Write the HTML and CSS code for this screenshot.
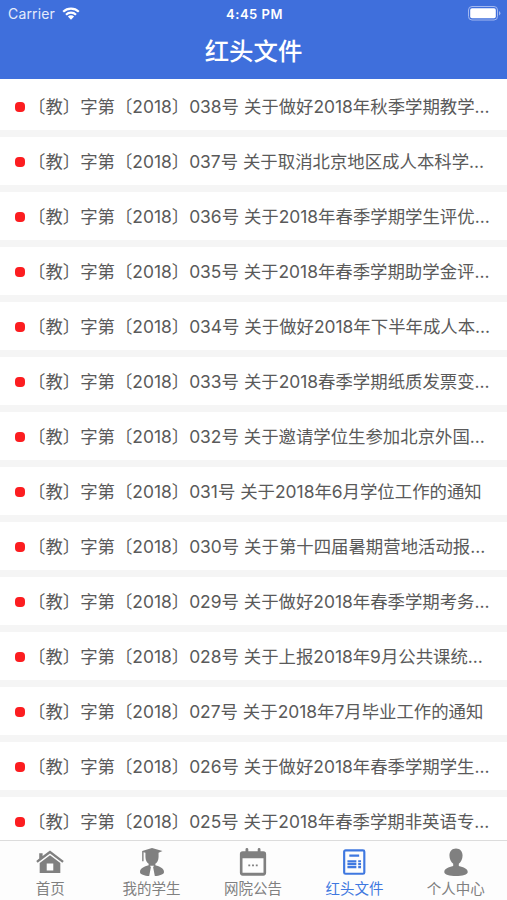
FILE: index.html
```
<!DOCTYPE html>
<html lang="zh-CN">

<head>
  <meta charset="utf-8" />
  <title>红头文件</title>
  <link rel="stylesheet" href="styles.css">
</head>

<body>
  <header class="header">
    <div class="status">
      <div class="carrier">
        <span>Carrier</span>
        <svg class="wifi" viewBox="0 0 18 13">
          <path d="M1.2 4.8a11.2 11.2 0 0 1 15.6 0M4 7.7a7.2 7.2 0 0 1 10 0" fill="none" stroke="#fff" stroke-width="2.2" />
          <path d="M5.9 9.6a4.4 4.4 0 0 1 6.2 0L9 12.8z" fill="#fff" />
        </svg>
      </div>
      <div class="time">4:45 PM</div>
      <svg class="battery" viewBox="0 0 33 15">
        <rect x=".5" y=".5" width="29" height="13.5" rx="3.5" fill="none" stroke="#a3b8ef" />
        <rect x="2.2" y="2.2" width="25.6" height="10" rx="1.8" fill="#fff" />
        <path d="M31 5v4.5q1.4-.7 1.4-2.2T31 5z" fill="#a3b8ef" />
      </svg>
    </div>
    <h1>红头文件</h1>
  </header>

  <ul class="list">
    <li>〔教〕字第〔2018〕038号 关于做好2018年秋季学期教学…</li>
    <li>〔教〕字第〔2018〕037号 关于取消北京地区成人本科学…</li>
    <li>〔教〕字第〔2018〕036号 关于2018年春季学期学生评优…</li>
    <li>〔教〕字第〔2018〕035号 关于2018年春季学期助学金评…</li>
    <li>〔教〕字第〔2018〕034号 关于做好2018年下半年成人本…</li>
    <li>〔教〕字第〔2018〕033号 关于2018春季学期纸质发票变…</li>
    <li>〔教〕字第〔2018〕032号 关于邀请学位生参加北京外国…</li>
    <li>〔教〕字第〔2018〕031号 关于2018年6月学位工作的通知</li>
    <li>〔教〕字第〔2018〕030号 关于第十四届暑期营地活动报…</li>
    <li>〔教〕字第〔2018〕029号 关于做好2018年春季学期考务…</li>
    <li>〔教〕字第〔2018〕028号 关于上报2018年9月公共课统…</li>
    <li>〔教〕字第〔2018〕027号 关于2018年7月毕业工作的通知</li>
    <li>〔教〕字第〔2018〕026号 关于做好2018年春季学期学生…</li>
    <li>〔教〕字第〔2018〕025号 关于2018年春季学期非英语专…</li>
  </ul>

  <nav class="tabs">
    <a class="tab">
      <svg viewBox="0 0 32 32">
        <path d="M4.5 5.500h3.600v3L16 2.600l14.700 11.200-1.500 2L16 5.900 2.800 15.800l-1.500-2 3.200-2.600z" />
        <path d="M16 7.600l11 8.300v10.800H5V15.900zM12.500 16.500v7.500h7v-7.500z" fill-rule="evenodd" />
      </svg>
      <span>首页</span>
    </a>
    <a class="tab">
      <svg viewBox="0 0 32 32">
        <path d="M16 0l11.200 3.300L23 5v4.500c0 3.500-1.600 6-3.400 7.400v1.500c4.700 1.200 9.200 3.200 9.200 7.100 0 2.700-4.800 4-9.800 4.400L17.200 20.500l.9-1.700h-4.200l.9 1.700L13 29.900C8 29.500 3.200 28.200 3.200 25.500c0-3.900 4.500-5.900 9.200-7.100v-1.500C10.600 15.500 9 13 9 9.500V5l-2-.6V14H5.500V3.300z" />
      </svg>
      <span>我的学生</span>
    </a>
    <a class="tab">
      <svg viewBox="0 0 32 32">
        <path d="M5 3.500h3V1.500a1.500 1.500 0 0 1 3 0v2h10V1.500a1.500 1.500 0 0 1 3 0v2H27A3 3 0 0 1 30 6.500v20a3 3 0 0 1-3 3H5a3 3 0 0 1-3-3v-20a3 3 0 0 1 3-3zM4.800 11v15.500h22.400V11z" fill-rule="evenodd" />
        <path d="M11 17.500h2v2h-2zM15 17.500h2v2h-2zM19 17.500h2v2h-2z" />
      </svg>
      <span>网院公告</span>
    </a>
    <a class="tab active">
      <svg viewBox="0 0 32 32">
        <rect x="5.500" y="2.500" width="21.500" height="25" rx="1.500" fill="none" stroke="currentColor" stroke-width="2.300" />
        <path d="M11 7h10.500v2.200H11zM9 13h9.500v2.500H9zM9 16h9.500v2.200H9zM9 18.800h9.500V21.500H9zM20.500 13H23.500v2.200h-3zM20.500 16h3v2.200h-3zM20.500 19h3v2.500h-3z" />
      </svg>
      <span>红头文件</span>
    </a>
    <a class="tab">
      <svg viewBox="0 0 32 32">
        <path d="M16 .5c4.300 0 7 3 7 7.500 0 3.700-1.600 7-4 8.700v2.500c5 1 9.500 3.100 9.500 6.300 0 3-5.700 4.300-12.500 4.300S3.500 28.500 3.500 25.500c0-3.200 4.500-5.300 9.500-6.300v-2.500C10.600 15 9 11.700 9 8 9 3.500 11.700.5 16 .5z" />
      </svg>
      <span>个人中心</span>
    </a>
  </nav>
</body>

</html>
```
FILE: styles.css
```
* {
  box-sizing: border-box;
}

body {
  display: flex;
  flex-direction: column;
  height: 100vh;
  margin: 0;
  overflow: hidden;
  background-color: #f5f5f5;
  color: #5a5a5a;
  font-family: Inter, "Noto Sans CJK SC", sans-serif;
}

.header {
  flex: none;
  height: 79px;
  background-color: #3f6fdc;
  color: #fff;
}

.status {
  display: grid;
  grid-template-columns: 1fr auto 1fr;
  align-items: center;
  height: 27px;
  padding: 0 6px 0 8px;
  font-size: 14px;
}

.carrier {
  display: flex;
  align-items: center;
  gap: 7px;
  color: #e5ebfb;
  letter-spacing: 0.15px;
}

.wifi {
  width: 18px;
  height: 13px;
}

.time {
  font-size: 13px;
  font-weight: 600;
  letter-spacing: 0.5px;
}

.battery {
  justify-self: end;
  width: 33px;
  height: 15px;
}

h1 {
  margin: 0;
  font-size: 24.4px;
  font-weight: 500;
  line-height: 49px;
  text-align: center;
}

.list {
  flex: 1;
  min-height: 0;
  margin: 0;
  padding: 0;
  overflow: hidden;
  list-style: none;
}

.list li {
  display: flex;
  align-items: center;
  height: 48px;
  margin-bottom: 7px;
  padding: 1px 0 0 15px;
  background-color: #fff;
  font-size: 17.4px;
  line-height: 47px;
  white-space: pre;
}

.list li:first-child {
  height: 51px;
  padding-top: 4px;
}

/* Red marker before each document */
.list li::before {
  content: "";
  width: 10px;
  height: 10px;
  margin-right: 3px;
  border-radius: 4px;
  background-color: #fc1d20;
}

.tabs {
  display: flex;
  flex: none;
  height: 60px;
  border-top: 1px solid #dcdcdc;
  background-color: #fdfdfd;
}

.tab {
  display: flex;
  flex: 1;
  flex-direction: column;
  align-items: center;
  padding: 7px 1px 0 0;
  color: #808080;
  font-size: 14.5px;
  line-height: 22px;
}

.tab svg {
  width: 32px;
  height: 32px;
  fill: currentColor;
}

.tab.active {
  color: #3f78e0;
}
```
